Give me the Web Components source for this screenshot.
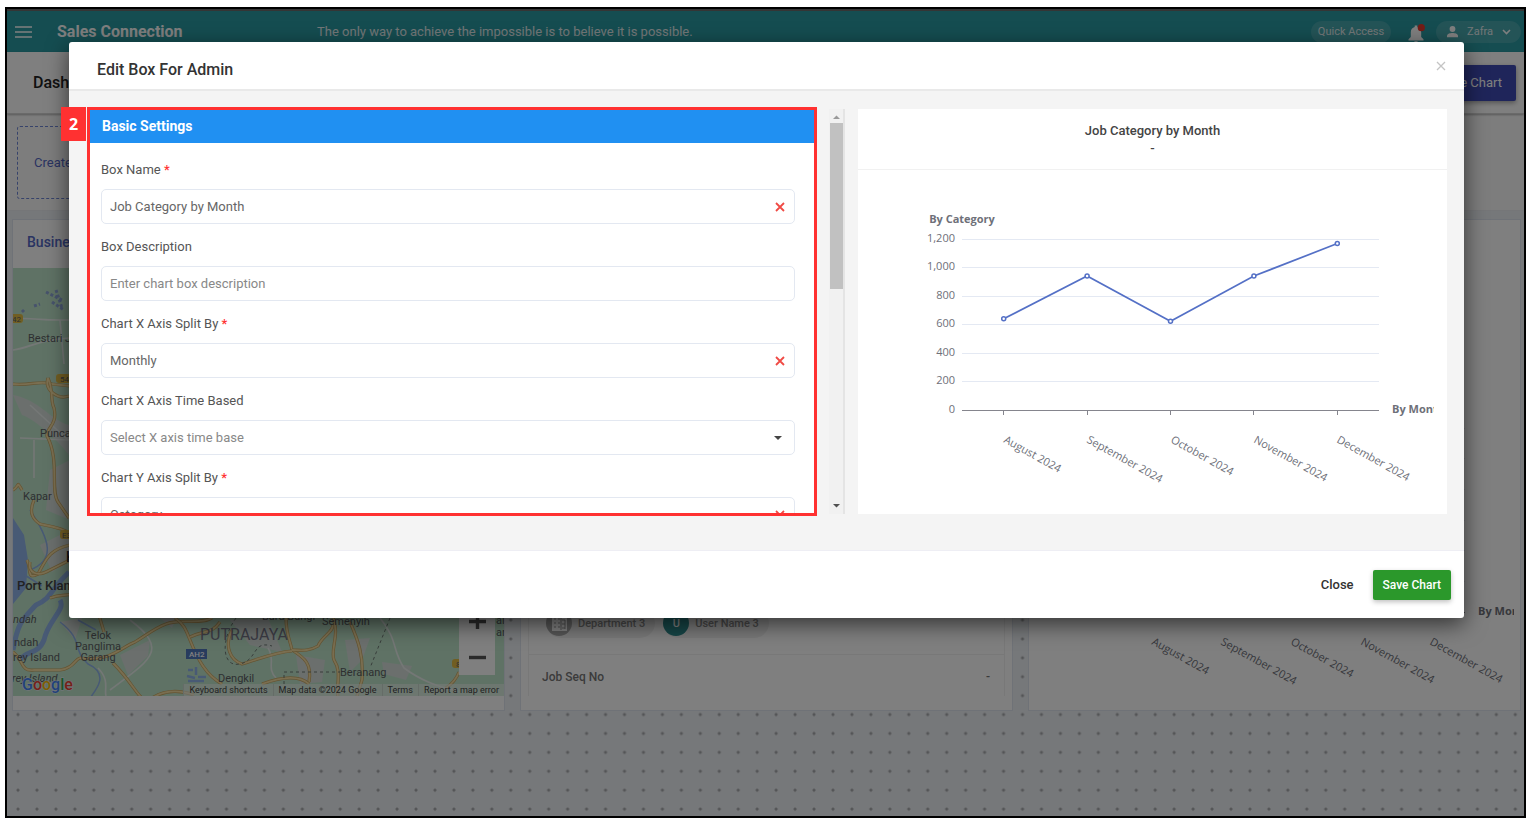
<!DOCTYPE html>
<html lang="en">
<head>
<meta charset="utf-8">
<title>Sales Connection - Dashboard</title>
<style>
  body { margin: 0; background: #fff; font-family: Roboto, "Liberation Sans", sans-serif; font-size: 13px; color: #444; }
</style>
</head>
<body>
<app-window>
  <app-header slot="page"></app-header>
  <dash-toolbar slot="page"></dash-toolbar>
  <dash-board slot="page">
    <dash-card heading="Business Location"><area-map></area-map></dash-card>
    <dash-card><job-list></job-list></dash-card>
    <dash-card><line-chart width="478" height="428" left="81" right="429" top="160" bottom="344"></line-chart></dash-card>
  </dash-board>
  <edit-dialog slot="dialog" heading="Edit Box For Admin">
    <settings-panel slot="form" step="2" heading="Basic Settings">
      <form-field label="Box Name" required value="Job Category by Month"></form-field>
      <form-field label="Box Description" placeholder="Enter chart box description"></form-field>
      <form-field label="Chart X Axis Split By" required value="Monthly"></form-field>
      <form-field label="Chart X Axis Time Based" kind="select" placeholder="Select X axis time base"></form-field>
      <form-field label="Chart Y Axis Split By" required value="Category"></form-field>
    </settings-panel>
    <chart-preview slot="preview" heading="Job Category by Month">
      <line-chart width="562" height="340" left="90" right="507" top="69" bottom="240"></line-chart>
    </chart-preview>
  </edit-dialog>
</app-window>

<script>
class Base extends HTMLElement {
  connectedCallback() {
    if (this.shadowRoot) return;
    this.attachShadow({ mode: "open" }).innerHTML =
      `<style>*{box-sizing:border-box}button{font:inherit;border:0;background:none;padding:0;cursor:pointer}</style>` + this.render();
  }
  attr(n) { return this.getAttribute(n) || ""; }
}

customElements.define("app-window", class extends Base {
  render() { return `
<style>
  :host { display: flex; padding: 7px 14px 14px 5px; box-sizing: border-box; min-height: 100vh; }
  .frame { flex: 1; position: relative; border: 2px solid #000; display: flex; flex-direction: column; min-width: 0; overflow: hidden; }
  .shade { position: absolute; inset: 0; background: rgba(0,0,0,.5); padding: 33px 60px 0 62px; }
</style>
<div class="frame"><slot name="page"></slot><div class="shade"><slot name="dialog"></slot></div></div>`; }
});

customElements.define("app-header", class extends Base {
  render() { return `
<style>
  :host { display: flex; align-items: center; height: 43px; box-sizing: border-box; border-top: 2px solid #6b6b6b; background: #2a9aa2; color: #fff; padding: 0 3px 0 8px; }
  .menu { width: 16px; height: 12px; display: block; }
  svg { display: block; }
  .brand { margin-left: 26px; font-size: 16px; font-weight: 700; width: 260px; }
  .motto { flex: 1; color: #e4eef0; font-size: 13px; }
  .pill { display: flex; align-items: center; height: 22px; border-radius: 11px; background: rgba(255,255,255,.14); color: #e4eef0; font-size: 11px; }
  .quick { padding: 0 7px; }
  .bell { margin: 4px 11px 0 17px; }
  .user { padding: 0 10px 0 11px; gap: 9px; }
</style>
<button class="menu" aria-label="Menu"><svg width="17" height="12"><path d="M0 1h17M0 6h17M0 11h17" stroke="#fff" stroke-width="1.4"/></svg></button>
<span class="brand">Sales Connection</span>
<span class="motto">The only way to achieve the impossible is to believe it is possible.</span>
<button class="pill quick">Quick Access</button>
<button class="bell" aria-label="Notifications"><svg width="17" height="19" viewBox="0 0 17 19"><path d="M.5 16.500v-1.200l2.300-2.300V8.200c0-2.900 1.500-4.800 3.900-5.300V1.500h2.600v1.400C11.700 3.400 13.200 5.300 13.200 8.200V13l2.300 2.300v1.200zM6.300 17.300h3.400a1.700 1.700 0 0 1-3.400 0z" fill="#fff"/><circle cx="13.300" cy="3.700" r="3.600" fill="#e8392c"/></svg></button>
<button class="pill user"><svg width="11" height="12" viewBox="0 0 11 12"><circle cx="5.500" cy="3" r="2.900" fill="#fff"/><path d="M0 11.300V9.800C0 7.600 3.500 6.900 5.500 6.900S11 7.600 11 9.800v1.500z" fill="#fff"/></svg><span>Zafra</span><svg width="9" height="6" viewBox="0 0 9 6"><path d="M1 1l3.500 3.500L8 1" fill="none" stroke="#fff" stroke-width="1.600"/></svg></button>`; }
});

customElements.define("dash-toolbar", class extends Base {
  render() { return `
<style>
  :host { display: block; }
  .bar { display: flex; align-items: center; justify-content: space-between; height: 62px; background: #fff; border-bottom: 1px solid #d4d4d4; box-shadow: 0 1px 2px rgba(0,0,0,.3); position: relative; padding: 0 8px 0 26px; }
  h1 { margin: 0; font-size: 16px; font-weight: 500; color: #222; }
  .save { height: 36px; padding: 0 14px; border-radius: 2px; background: #3f4bb4; color: #fff; font-size: 13px; box-shadow: 0 2px 5px rgba(0,0,0,.35); }
  .strip { height: 97px; background: #fbfbfb; border-bottom: 1px solid #eaecf0; padding: 12px 10px; }
  .create { display: flex; align-items: center; width: 200px; height: 73px; padding-left: 16px; border: 1px dashed #6f86d6; border-radius: 3px; color: #5468c4; font-size: 13px; }
</style>
<div class="bar"><h1>Dashboard</h1><button class="save">Create Chart</button></div>
<div class="strip"><button class="create">Create Box</button></div>`; }
});

customElements.define("dash-board", class extends Base {
  render() { return `
<style>
  :host { flex: 1; display: grid; grid-template-columns: repeat(3, minmax(0, 1fr)); align-items: start; gap: 15px; padding: 8px 3px 8px 5px;
    background: radial-gradient(circle at 11px 12px, #a9abae 1px, transparent 2px) 0 0 / 19px 19px round #edf0f4; }
</style><slot></slot>`; }
});

customElements.define("dash-card", class extends Base {
  render() { return `
<style>
  :host { display: block; background: #fff; border: 1px solid #dfe5ee; box-sizing: border-box; padding-bottom: 14px; min-width: 0; }
  h2 { margin: 0; height: 48px; line-height: 44px; padding-left: 14px; font-size: 14px; font-weight: 500; color: #5468c4; }
</style><h2>${this.attr("heading")}</h2><slot></slot>`; }
});

customElements.define("job-list", class extends Base {
  render() { return `
<style>
  :host { display: flex; flex-direction: column; height: 428px; margin: 0 7px; border: 1px solid #f0f0f0; border-width: 0 1px; box-sizing: border-box; }
  .chips { flex: 1; display: flex; align-items: flex-end; gap: 8px; padding: 0 17px 16px; border-bottom: 1px solid #f0f0f0; }
  .chip { display: flex; align-items: center; gap: 6px; height: 30px; border-radius: 15px; background: #f1f1f1; color: #8c8c8c; font-size: 11px; font-weight: 500; padding-right: 10px; }
  .dot { width: 26px; height: 26px; border-radius: 13px; display: grid; place-items: center; background: #aaa; color: #fff; }
  .u { background: #2d8a8c; }
  dl { display: flex; justify-content: space-between; margin: 0; padding: 4px 14px 0 13px; line-height: 37px; font-size: 12px; font-weight: 500; color: #777; }
  dd { margin: 0; }
</style>
<div class="chips">
  <span class="chip"><span class="dot"><svg width="17" height="17"><path d="M1 1h15v15H1z" fill="#fff"/><path d="M3 4h2M7 4h2M3 8h2M7 8h2M3 12h2M7 12h2M11 5h3M11 9h3M11 13h3M10 3v12M14 5v9" stroke="#999"/></svg></span>Department 3</span>
  <span class="chip"><span class="dot u">U</span>User Name 3</span>
</div>
<dl><dt>Job Seq No</dt><dd>-</dd></dl>`; }
});

customElements.define("area-map", class extends Base {
  render() {
    const roads = [
      "M13 384C30 386 40 380 52 384L70 386", "M48 378C44 390 58 400 69 396M48 378C54 392 50 400 54 408C58 425 46 428 47 436C60 460 50 490 58 502L69 518",
      "M13 490C20 486 16 480 22 490M34 500C28 514 34 520 40 524C60 528 66 530 70 534", "M27 560C32 570 26 580 38 574C46 560 48 550 70 545",
      "M30 562C28 572 36 578 50 570L70 560M50 598C60 594 66 596 72 594", "M13 652C24 660 20 672 34 670H60C74 668 74 660 80 658",
      "M80 658C110 662 120 648 135 642C148 634 155 628 166 624C180 618 200 625 212 618", "M113 663C130 680 135 692 142 698M98 612L104 632",
      "M175 618C184 624 186 630 190 640C198 660 206 675 222 684", "M190 637C204 630 212 634 220 622",
      "M286 618C286 634 290 640 292 650C305 658 312 664 309 682", "M232 630C224 646 230 660 242 664C262 658 276 652 292 651",
      "M333 624C334 632 322 636 318 646C308 652 300 650 292 650", "M333 618C340 634 330 650 334 660C342 672 336 684 338 698M350 622C358 640 364 656 362 680L357 696",
      "M152 698C165 690 180 690 194 695M262 684C284 676 300 676 309 684M459 672C456 680 452 684 446 688"
    ].map(d => `<path d="${d}" stroke="#c9a864" stroke-width="3.200"/><path d="${d}" stroke="#f4dca0" stroke-width="1.800"/>`).join("");
    return `
<style>
  :host { display: block; position: relative; height: 428px; overflow: hidden; background: #bfe5cb; }
  svg.map { display: block; width: 100%; height: 100%; }
  text { font-family: Roboto, sans-serif; font-size: 11px; fill: #5c5f63; }
  .zoom { position: absolute; right: 9px; bottom: 21px; width: 36px; background: #fff; display: flex; flex-direction: column; }
  .zoom button { height: 36px; display: grid; place-items: center; }
  .legal { position: absolute; right: 0; bottom: 0; display: flex; height: 12px; background: rgba(236,243,238,.6); font-size: 9px; line-height: 12px; }
  .legal > * { padding: 0 5px; color: #444; text-decoration: none; border-left: 1px solid #cbd9cf; white-space: nowrap; }
</style>
<svg class="map" viewBox="13 268 492 428" preserveAspectRatio="xMinYMax slice" fill="none">
  <path d="M13 268H505V696H13z" fill="#bfe5cb"/>
  <path d="M13 395C40 400 50 420 69 425V455C58 440 36 420 22 415zM50 470L70 460V520L46 510zM40 545L70 530V560L52 572z" fill="#d6dedb"/>
  <path d="M120 655L150 640 148 656 128 675zM60 622L82 618 75 640zM230 620L268 618 282 652 250 645zM345 640L370 638 362 660 350 672zM296 655L325 660 322 682 300 684zM160 618H176L172 628zM382 662L412 666 406 680 384 674z" fill="#d6dedb"/>
  <path d="M13 518L24 535 28 560 26 588 13 604z" fill="#90b4ea"/>
  <path d="M69 572C50 590 52 598 36 605C22 620 18 622 13 650M60 600C66 610 48 620 44 640C38 655 26 650 20 660" stroke="#90b4ea" stroke-width="5"/>
  <path d="M60 622C84 640 72 650 88 664C110 674 96 690 90 698M78 620L96 630M20 572L42 586M30 510C50 540 56 560 30 570" stroke="#90b4ea" stroke-width="1.500"/>
  <path d="M46 292L54 296 62 300M52 302L64 310M34 306L40 304M24 312L22 310M56 290L62 308" stroke="#8ea6d8" stroke-width="3" stroke-dasharray="3 2"/>
  <path d="M188 670h5M196 667v8M187 676l8 2M198 677h8M188 681h16" stroke="#90b4ea" stroke-width="2.500"/>
  <path d="M13 318C60 320 40 320 69 320M13 350C30 348 36 340 69 338M60 320L64 364M30 405L68 440M34 440V478M20 438L69 440M130 620C170 650 150 660 110 690M380 618C398 640 392 650 404 668C420 680 440 688 456 690M98 668C110 680 104 690 106 696M268 648C276 660 266 668 276 678" stroke="#e9efec" stroke-width="1.600"/>
  ${roads}
  <path d="M390 618L370 668M284 684V672H340M236 618C220 640 222 668 240 664C258 660 252 640 272 646" stroke="#6f7a75" stroke-dasharray="3 3"/>
  <g><rect x="9" y="314" width="14" height="9" rx="3" fill="#e3bd45"/><rect x="56" y="374" width="20" height="9" rx="3" fill="#e3bd45"/><rect x="60" y="530" width="18" height="9" rx="3" fill="#e3bd45"/><rect x="452" y="659" width="14" height="9" rx="3" fill="#e3bd45"/><rect x="186" y="649" width="21" height="10" fill="#5078bd"/></g>
  <text x="12" y="322" style="font-size:8px">42</text><text x="60" y="382" style="font-size:8px">54</text><text x="62" y="538" style="font-size:8px">E30</text><text x="456" y="667" style="font-size:8px">8</text><text x="189" y="657" style="font-size:8px;fill:#fff;font-weight:500">AH2</text>
  <text x="28" y="342">Bestari Jaya</text><text x="40" y="437">Puncak Alam</text><text x="23" y="500">Kapar</text>
  <text x="66" y="562" style="font-size:14px;font-weight:500;fill:#222">Klang</text><text x="17" y="590" style="font-size:13px;font-weight:500;fill:#444">Port Klang</text>
  <g font-style="italic"><text x="13" y="623">ndah</text><text x="12" y="682">rey Island</text></g>
  <text x="14" y="646">ndah</text><text x="13" y="661">rey Island</text>
  <g text-anchor="middle"><text x="98" y="639">Telok</text><text x="98" y="650">Panglima</text><text x="98" y="661">Garang</text></g>
  <text x="200" y="640" style="font-size:16px;fill:#778">PUTRAJAYA</text>
  <text x="218" y="682">Dengkil</text><text x="340" y="676">Beranang</text><text x="322" y="625">Semenyih</text><text x="262" y="620">Baru Bangi</text>
  <text x="496" y="624">ala</text><text x="496" y="636">ar</text>
  <text x="22" y="690" style="font-size:16px;font-weight:500;stroke:#eef;stroke-width:1px;paint-order:stroke"><tspan fill="#4285f4">G</tspan><tspan fill="#ea4335">o</tspan><tspan fill="#fbbc05">o</tspan><tspan fill="#4285f4">g</tspan><tspan fill="#34a853">l</tspan><tspan fill="#ea4335">e</tspan></text>
</svg>
<div class="zoom"><button aria-label="Zoom in"><svg width="17" height="17"><path d="M8.500 1v15M0 8.500h17" stroke="#555" stroke-width="3.400"/></svg></button><button aria-label="Zoom out"><svg width="17" height="17"><path d="M0 8.500h17" stroke="#555" stroke-width="3.400"/></svg></button></div>
<div class="legal"><a href="#">Keyboard shortcuts</a><span>Map data ©2024 Google</span><a href="#">Terms</a><a href="#">Report a map error</a></div>`; }
});

customElements.define("line-chart", class extends Base {
  render() {
    const n = k => Number(this.getAttribute(k));
    const [w, h, l, r, t, b] = ["width", "height", "left", "right", "top", "bottom"].map(n);
    const months = ["August 2024", "September 2024", "October 2024", "November 2024", "December 2024"];
    const values = [640, 940, 622, 940, 1168];
    const step = (r - l) / 5, y = v => b - (b - t) * v / 1200, x = i => l + step * (i + .5);
    let s = "";
    for (let v = 0; v <= 1200; v += 200) {
      const gy = Math.floor(y(v));
      if (v) s += `<path d="M${l} ${gy}.5H${r}" stroke="#e4e9f3"/>`;
      s += `<text x="${l - 7}" y="${gy + 3}" text-anchor="end">${v.toLocaleString("en-US")}</text>`;
    }
    s += `<path d="M${l} ${b}.5H${r}" stroke="#85858d"/>`;
    months.forEach((m, i) => {
      s += `<path d="M${Math.floor(x(i))}.5 ${b}v5" stroke="#85858d"/>`;
      s += `<text transform="translate(${Math.round(x(i)) - 1} ${b + 32}) rotate(29)">${m}</text>`;
    });
    s += `<polyline points="${values.map((v, i) => x(i) + "," + y(v)).join(" ")}" fill="none" stroke="#5470c6" stroke-width="1.700"/>`;
    values.forEach((v, i) => s += `<circle cx="${x(i)}" cy="${y(v)}" r="2" fill="#fff" stroke="#5470c6" stroke-width="1.500"/>`);
    s += `<text class="n" x="${l}" y="${t - 16}" text-anchor="middle">By Category</text><text class="n" x="${r + 13}" y="${b + 3}">By Month</text>`;
    return `
<style>
  :host { display: flex; justify-content: center; }
  svg { display: block; overflow: hidden; }
  text { font: 11px "Open Sans", "Noto Sans", sans-serif; fill: #6e7079; }
  .n { font-weight: 700; }
</style><svg width="${w}" height="${h}" viewBox="0 0 ${w} ${h}" role="img" aria-label="Job Category by Month">${s}</svg>`; }
});

customElements.define("edit-dialog", class extends Base {
  render() { return `
<style>
  :host { display: block; border-radius: 3px; background: #fff; box-shadow: 0 6px 22px rgba(0,0,0,.6); }
  header { display: flex; justify-content: space-between; height: 49px; padding: 0 18px 0 28px; border-bottom: 2px solid #e9e9e9; }
  h2 { margin: 0; line-height: 56px; font-size: 16px; font-weight: 500; color: #333; }
  .x { height: 48px; }
  svg { display: block; }
  .body { display: grid; grid-template-columns: minmax(0, 758fr) minmax(0, 589fr); gap: 13px; padding: 16px 17px 34px 18px; background: #f4f4f4; border-bottom: 1px solid #eeeef4; }
  .left { display: flex; gap: 12px; min-width: 0; }
  .bar { display: flex; flex-direction: column; align-items: center; width: 16px; margin: 2px 0; padding: 6px 0; background: #f1f1f1; border-right: 2px solid #e4e4e4; }
  .thumb { width: 13px; height: 166px; margin: 4px 0 auto; background: #c1c1c1; }
  .right { margin: 2px 0; background: #fff; }
  footer { display: flex; justify-content: flex-end; align-items: center; gap: 19px; height: 67px; padding: 0 13px; }
  .close { color: #333; font-weight: 500; font-size: 13px; }
  .save { height: 30px; padding: 0 10px; background: #2b982b; color: #fff; border-radius: 2px; font-size: 12px; font-weight: 500; box-shadow: 0 2px 5px rgba(0,0,0,.25); }
</style>
<header><h2>${this.attr("heading")}</h2><button class="x" aria-label="Close dialog"><svg width="10" height="10"><path d="M1 1l8 8M9 1l-8 8" stroke="#c4c4c4" stroke-width="1.300"/></svg></button></header>
<div class="body">
  <div class="left"><slot name="form"></slot>
    <div class="bar"><svg width="7" height="4"><path d="M0 4l3.500-3.500L7 4z" fill="#999"/></svg><div class="thumb"></div><svg width="7" height="4"><path d="M0 0l3.500 3.500L7 0z" fill="#505050"/></svg></div>
  </div>
  <div class="right"><slot name="preview"></slot></div>
</div>
<footer><button class="close">Close</button><button class="save">Save Chart</button></footer>`; }
});

customElements.define("settings-panel", class extends Base {
  render() { return `
<style>
  :host { display: block; flex: 1; min-width: 0; position: relative; }
  .box { height: 409px; overflow: hidden; border: 3px solid #ff3131; background: #fff; }
  .badge { position: absolute; right: 100%; top: 0; width: 25px; height: 34px; margin-right: 1px; display: grid; place-items: center; background: #ff3131; color: #fff; font: 700 16px "Open Sans", sans-serif; }
  h3 { margin: 0; height: 33px; line-height: 32px; padding-left: 12px; background: #2090f2; color: #fff; font-size: 14px; font-weight: 700; }
  .fields { display: grid; gap: 11px; padding: 15px 19px 0 11px; }
</style>
<div class="badge">${this.attr("step")}</div>
<div class="box"><h3>${this.attr("heading")}</h3><div class="fields"><slot></slot></div></div>`; }
});

customElements.define("form-field", class extends Base {
  render() {
    const req = this.hasAttribute("required"), v = this.attr("value"), p = this.attr("placeholder");
    const control = this.attr("kind") === "select"
      ? `<select id="c"><option>${p}</option></select><svg width="8" height="4"><path d="M0 0h8L4 4z" fill="#444"/></svg>`
      : `<input id="c" value="${v}" placeholder="${p}">` + (v ? `<button aria-label="Clear ${this.attr("label")}"><svg width="10" height="10"><path d="M1 1l8 8M9 1l-8 8" stroke="#f04a44" stroke-width="1.800"/></svg></button>` : "");
    return `
<style>
  :host { display: block; }
  label { display: block; line-height: 24px; margin-bottom: 7px; font-size: 13px; color: #555; }
  b { color: #f33; font-weight: 500; }
  .box { display: flex; align-items: center; height: 35px; border: 1px solid #e3e8f1; border-radius: 5px; padding: 0 9px 0 8px; background: #fff; }
  input, select { flex: 1; min-width: 0; height: 30px; border: 0; padding: 0; background: none; appearance: none; outline: 0; font: inherit; font-size: 13px; color: #666; }
  select, input::placeholder { color: #888; opacity: 1; }
  svg { display: block; }
  select + svg { margin-right: 3px; }
</style>
<label for="c">${this.attr("label")}${req ? " <b>*</b>" : ""}</label>
<div class="box">${control}</div>`; }
});

customElements.define("chart-preview", class extends Base {
  render() { return `
<style>
  :host { display: block; text-align: center; }
  header { height: 61px; padding-top: 13px; border-bottom: 1px solid #f1f1f1; font-size: 13px; font-weight: 500; line-height: 18px; color: #444; }
  h3 { margin: 0; font-size: 13px; font-weight: 500; }
</style><header><h3>${this.attr("heading")}</h3>-</header><slot></slot>`; }
});
</script>
</body>
</html>
